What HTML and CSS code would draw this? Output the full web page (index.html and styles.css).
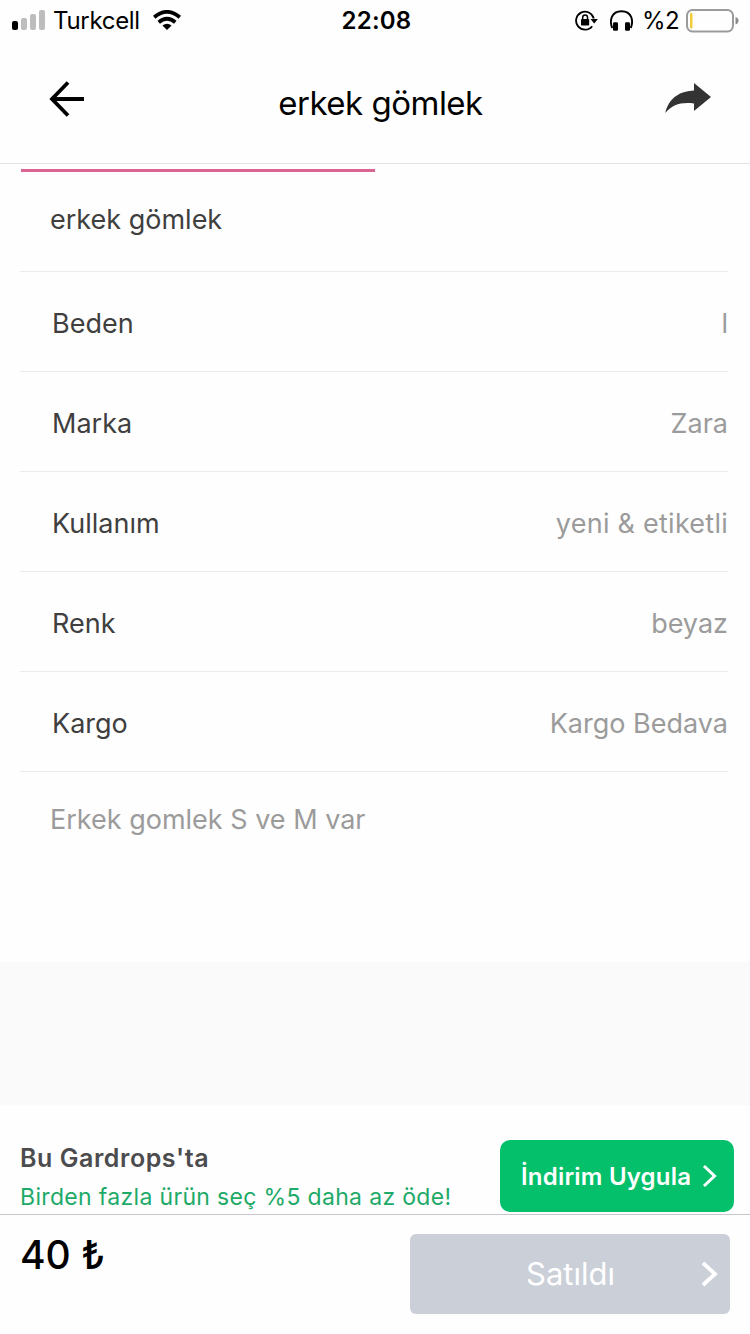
FILE: index.html
```html
<!DOCTYPE html>
<html lang="tr">
<head>
<meta charset="utf-8">
<title>erkek gömlek</title>
<link rel="stylesheet" href="styles.css">
</head>
<body>
<div class="screen">
  <div class="status">
    <div class="status-left">
      <svg class="signal" width="34" height="20" viewBox="0 0 34 20"><rect x="0" y="11" width="6" height="9" rx="2" fill="#000"/><g fill="#bdbdbd"><rect x="9" y="8" width="6" height="12" rx="2"/><rect x="18" y="4" width="6" height="16" rx="2"/><rect x="27" y="0" width="6" height="20" rx="2"/></g></svg>
      <span class="carrier">Turkcell</span>
      <svg class="wifi" width="28" height="20" viewBox="0 0 28 20"><g fill="none" stroke="#000" stroke-width="3.8"><path d="M1.200 7.200Q14 -3.400 26.800 7.200"/><path d="M5.700 12.200Q14 5.400 22.300 12.200"/></g><path d="M9.400 15.600Q14 12 18.600 15.600L14 20Z"/></svg>
    </div>
    <span class="clock">22:08</span>
    <div class="status-right">
      <svg class="lock" width="23" height="21" viewBox="0 0 23 21"><path d="M17.200 16.200A9 9 0 1 1 18.800 8.500" fill="none" stroke="#000" stroke-width="1.800"/><path d="M15.500 9H22.900L19.200 13.500Z"/><rect x="6" y="9" width="8.200" height="6.500" rx=".8"/><path d="M7.700 9V7.300a2.400 2.400 0 0 1 4.800 0V9" fill="none" stroke="#000" stroke-width="1.500"/></svg>
      <svg class="phones" width="23" height="21" viewBox="0 0 23 21"><path d="M2.300 18C-.8 11 1.200 1.200 11.500 1.200S23.800 11 20.700 18" fill="none" stroke="#000" stroke-width="1.900"/><rect x="3" y="12.300" width="5" height="8.400" rx="1.300"/><rect x="15" y="12.300" width="5" height="8.400" rx="1.300"/></svg>
      <span class="percent">%2</span>
      <svg class="battery" width="53" height="24" viewBox="0 0 53 24"><rect x="1" y="1" width="46" height="21.500" rx="5.500" fill="none" stroke="#9b9b9b" stroke-width="2"/><rect x="4" y="4" width="2.500" height="15.500" rx="1" fill="#f2cb3a"/><path d="M49.500 8q3 1 3 3.800T49.500 15.600Z" fill="#8b8b8b"/></svg>
    </div>
  </div>
  <header class="header">
    <svg class="back" width="36" height="38" viewBox="0 0 36 38"><path d="M19 2.500L3 19L19 35.500M3 19H35" fill="none" stroke="#000" stroke-width="3.800"/></svg>
    <h1 class="title">erkek gömlek</h1>
    <svg class="share" width="46" height="31" viewBox="0 0 46 31"><path d="M29 0L46 14L29 28V20.500C16 19 7.500 21.500 .3 30C4 14 16 8 29 7.500Z" fill="#333"/></svg>
  </header>
  <main class="details">
    <div class="tab-line"></div>
    <div class="name">erkek gömlek</div>
    <div class="row"><span>Beden</span><span class="value">l</span></div>
    <div class="row"><span>Marka</span><span class="value">Zara</span></div>
    <div class="row"><span>Kullanım</span><span class="value spaced">yeni &amp; etiketli</span></div>
    <div class="row"><span>Renk</span><span class="value">beyaz</span></div>
    <div class="row"><span>Kargo</span><span class="value">Kargo Bedava</span></div>
    <p class="description">Erkek gomlek S ve M var</p>
  </main>
  <div class="spacer"></div>
  <section class="promo">
    <div class="promo-text">
      <div class="promo-title">Bu Gardrops'ta</div>
      <div class="promo-sub">Birden fazla ürün seç %5 daha az öde!</div>
    </div>
    <div class="apply"><span class="apply-label">İndirim Uygula</span><svg width="15" height="24" viewBox="0 0 15 24"><path d="M2 2L12.500 12L2 22" fill="none" stroke="#fff" stroke-width="3"/></svg></div>
  </section>
  <footer class="footer">
    <div class="price">40 ₺</div>
    <div class="sold"><span class="sold-label">Satıldı</span><svg class="sold-arrow" width="17" height="26" viewBox="0 0 17 26"><path d="M2 2L14 13L2 24" fill="none" stroke="#fff" stroke-width="3.800"/></svg></div>
  </footer>
</div>
</body>
</html>
```
FILE: styles.css
```css
* { box-sizing: border-box; }
body { margin: 0; background: #fff; font-family: Inter, "Liberation Sans", sans-serif; }
svg { display: block; flex: none; }
.screen { width: 750px; height: 1334px; display: flex; flex-direction: column; overflow: hidden; background: #fefefe; white-space: nowrap; }
.status { height: 41px; flex: none; display: grid; grid-template-columns: 1fr auto 1fr; align-items: center; padding: 0 11px 0 12px; color: #000; font-size: 24px; line-height: 40px; }
.status-left, .status-right { display: flex; align-items: center; }
.status-left svg { margin-top: -1px; }
.status-right { justify-content: flex-end; }
.carrier { margin: 1px 13px 0 7px; letter-spacing: -.3px; }
.clock { margin: 1px 0 0 2px; font-weight: 600; letter-spacing: .2px; }
.phones { margin-left: 12px; }
.percent { margin: 1px 7px 0 9px; letter-spacing: -.6px; }
.header { height: 123px; flex: none; display: grid; grid-template-columns: 1fr auto 1fr; align-items: center; padding: 0 39px 7px 49px; border-bottom: 1px solid #e3e3e5; }
.title { margin: 8px 0 0 1px; font-size: 33px; line-height: 42px; font-weight: 400; letter-spacing: -.5px; color: #000; }
.share { justify-self: end; }
.details { height: 798px; flex: none; padding: 5px 22px 0 20px; color: #3f3f3f; font-size: 27px; line-height: 34px; }
.tab-line { width: 354px; height: 3px; margin-left: 1px; background: #dc6495; }
.name { height: 100px; padding: 31px 30px 0; border-bottom: 1px solid #ebebed; }
.row { height: 100px; display: flex; justify-content: space-between; align-items: center; padding: 4px 0 0 32px; border-bottom: 1px solid #ebebed; }
.value, .description { color: #9b9b9b; }
.spaced { letter-spacing: .25px; }
.description { margin: 31px 0 0 30px; }
.spacer { height: 143px; flex: none; background: #fafafa; }
.promo { height: 110px; flex: none; display: flex; justify-content: space-between; align-items: flex-start; padding: 35px 16px 0 20px; border-bottom: 1px solid #c9c7cb; }
.promo-title { margin-top: 2px; font-size: 25px; line-height: 32px; font-weight: 600; letter-spacing: .55px; color: #4c4c4e; }
.promo-sub { margin-top: 9px; font-size: 23px; line-height: 28px; letter-spacing: .33px; color: #1daa68; }
.apply { width: 234px; height: 72px; display: flex; align-items: center; justify-content: space-between; padding: 0 17px 0 21px; border-radius: 10px; background: #04c06b; color: #fff; }
.apply-label { margin-top: 2px; font-size: 24px; line-height: 32px; font-weight: 600; letter-spacing: .2px; }
.footer { flex: 1; display: flex; justify-content: space-between; align-items: flex-start; padding: 19px 20px 0; }
.price { margin-top: 1px; font-size: 39px; line-height: 40px; font-weight: 500; color: #000; }
.sold { width: 320px; height: 80px; display: grid; grid-template-columns: 1fr auto 1fr; align-items: center; padding: 0 12px; border-radius: 6px; background: #cbcfd8; color: #fff; }
.sold-label { grid-column: 2; margin-left: 1px; font-size: 31px; line-height: 38px; }
.sold-arrow { justify-self: end; }
```
